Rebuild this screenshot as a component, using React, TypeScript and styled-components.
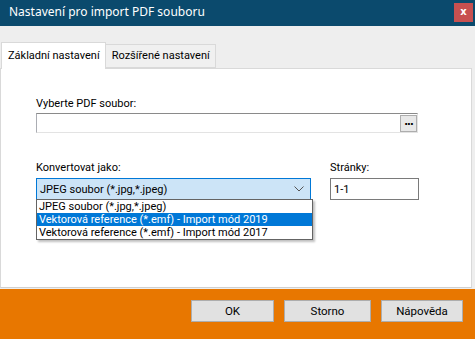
import styled, { createGlobalStyle } from 'styled-components';

const GlobalStyle = createGlobalStyle`
  html, body {
    margin: 0;
    padding: 0;
  }
  body {
    font-family: Roboto, "Noto Sans", sans-serif;
    font-size: 11px;
    color: #000;
  }
  * {
    box-sizing: border-box;
  }
`;

const Window = styled.div`
  width: 475px;
  height: 339px;
  display: flex;
  flex-direction: column;
  background: #eeeeee;
  position: relative;
  overflow: hidden;
`;

const TitleBar = styled.div`
  height: 26px;
  flex: none;
  background: #0b4a6d;
  display: flex;
  align-items: flex-start;
  justify-content: space-between;
  padding-left: 9px;
`;

const Title = styled.div`
  color: #fff;
  font-family: "Noto Sans", sans-serif;
  font-size: 12px;
  line-height: 24px;
`;

const CloseButton = styled.div`
  width: 19px;
  height: 19px;
  margin-top: 3px;
  margin-right: 2px;
  background: #c75050;
  color: #fff;
  font-family: "DejaVu Sans", sans-serif;
  font-weight: bold;
  font-size: 10px;
  line-height: 18px;
  text-align: center;
`;

const Body = styled.div`
  flex: 1;
  display: flex;
  flex-direction: column;
  padding: 16px 3px 0 0;
`;

const TabRow = styled.div`
  display: flex;
  align-items: flex-end;
  height: 26px;
  padding-left: 1px;
  position: relative;
  z-index: 1;
`;

const Tab = styled.div<{ $active?: boolean }>`
  height: ${(p) => (p.$active ? '27px' : '24px')};
  margin-bottom: ${(p) => (p.$active ? '-1px' : '0')};
  padding: 0 5px 0 6px;
  display: flex;
  align-items: center;
  background: ${(p) => (p.$active ? '#fff' : '#f0f0f0')};
  border: 1px solid #d9d9d9;
  border-bottom: ${(p) => (p.$active ? 'none' : '1px solid #d9d9d9')};
  border-left: ${(p) => (p.$active ? '1px solid #d9d9d9' : 'none')};
  white-space: nowrap;
  line-height: 14px;
`;

const Panel = styled.div`
  height: 220px;
  background: #fff;
  border: 1px solid #d9d9d9;
  border-bottom-color: #d0d0d0;
  padding: 27px 0 0 35px;
  position: relative;
`;

const Label = styled.div`
  line-height: 16px;
  height: 16px;
`;

const FileField = styled.div`
  width: 382px;
  height: 20px;
  margin-top: 1px;
  border: 1px solid #abadb3;
  border-top-color: #8a8a8a;
  border-bottom-color: #e3e3e3;
  border-right-color: #e3e3e3;
  display: flex;
  justify-content: flex-end;
  align-items: center;
`;

const BrowseButton = styled.div`
  width: 17px;
  height: 17px;
  background: #e8e8e8;
  border: 1px solid #adadad;
  font-family: "DejaVu Sans", sans-serif;
  font-weight: bold;
  font-size: 10px;
  line-height: 12px;
  text-align: center;
  letter-spacing: -1px;
`;

const Row = styled.div`
  display: flex;
  gap: 19px;
  margin-top: 27px;
`;

const Column = styled.div<{ $w: number }>`
  width: ${(p) => p.$w}px;
  display: flex;
  flex-direction: column;
  gap: 2px;
`;

const Select = styled.div`
  height: 22px;
  background: #cce4f7;
  border: 1px solid #0078d7;
  display: flex;
  align-items: center;
  justify-content: space-between;
  padding: 0 3px;
`;

const Chevron = styled.svg`
  width: 10px;
  height: 6px;
  margin-right: 3px;
`;

const TextInput = styled.div`
  height: 22px;
  border: 1px solid #7a7a7a;
  display: flex;
  align-items: center;
  padding-left: 3px;
`;

const DropList = styled.div`
  position: absolute;
  left: 35px;
  top: 130px;
  width: 277px;
  background: #fff;
  border: 1px solid #646464;
  box-shadow: 2px 2px 2px rgba(0, 0, 0, 0.25);
  z-index: 2;
`;

const Option = styled.div<{ $selected?: boolean }>`
  height: 13px;
  line-height: 13px;
  padding-left: 2px;
  white-space: nowrap;
  background: ${(p) => (p.$selected ? '#0078d7' : 'transparent')};
  color: ${(p) => (p.$selected ? '#fff' : '#000')};
`;

const Footer = styled.div`
  height: 51px;
  flex: none;
  background: #e87700;
  display: flex;
  justify-content: flex-end;
  align-items: flex-start;
  gap: 10px;
  padding: 11px 12px 0 0;
  margin-top: 1px;
`;

const Button = styled.div<{ $w: number }>`
  width: ${(p) => p.$w}px;
  height: 22px;
  background: #e1e1e1;
  border: 1px solid #adadad;
  display: flex;
  align-items: center;
  justify-content: center;
  font-size: 11.5px;
`;

export default function App() {
  return (
    <>
      <GlobalStyle />
      <Window>
        <TitleBar>
          <Title>Nastavení pro import PDF souboru</Title>
          <CloseButton>x</CloseButton>
        </TitleBar>
        <Body>
          <TabRow>
            <Tab $active>Základní nastavení</Tab>
            <Tab>Rozšířené nastavení</Tab>
          </TabRow>
          <Panel>
            <Label>Vyberte PDF soubor:</Label>
            <FileField>
              <BrowseButton>...</BrowseButton>
            </FileField>
            <Row>
              <Column $w={275}>
                <Label>Konvertovat jako:</Label>
                <Select>
                  <span>JPEG soubor (*.jpg,*.jpeg)</span>
                  <Chevron viewBox="0 0 10 6">
                    <path d="M0.5 0.5 L5 5 L9.5 0.5" fill="none" stroke="#555" strokeWidth="1" />
                  </Chevron>
                </Select>
              </Column>
              <Column $w={89}>
                <Label>Stránky:</Label>
                <TextInput>1-1</TextInput>
              </Column>
            </Row>
            <DropList>
              <Option>JPEG soubor (*.jpg,*.jpeg)</Option>
              <Option $selected>Vektorová reference (*.emf) - Import mód 2019</Option>
              <Option>Vektorová reference (*.emf) - Import mód 2017</Option>
            </DropList>
          </Panel>
        </Body>
        <Footer>
          <Button $w={83}>OK</Button>
          <Button $w={87}>Storno</Button>
          <Button $w={82}>Nápověda</Button>
        </Footer>
      </Window>
    </>
  );
}
